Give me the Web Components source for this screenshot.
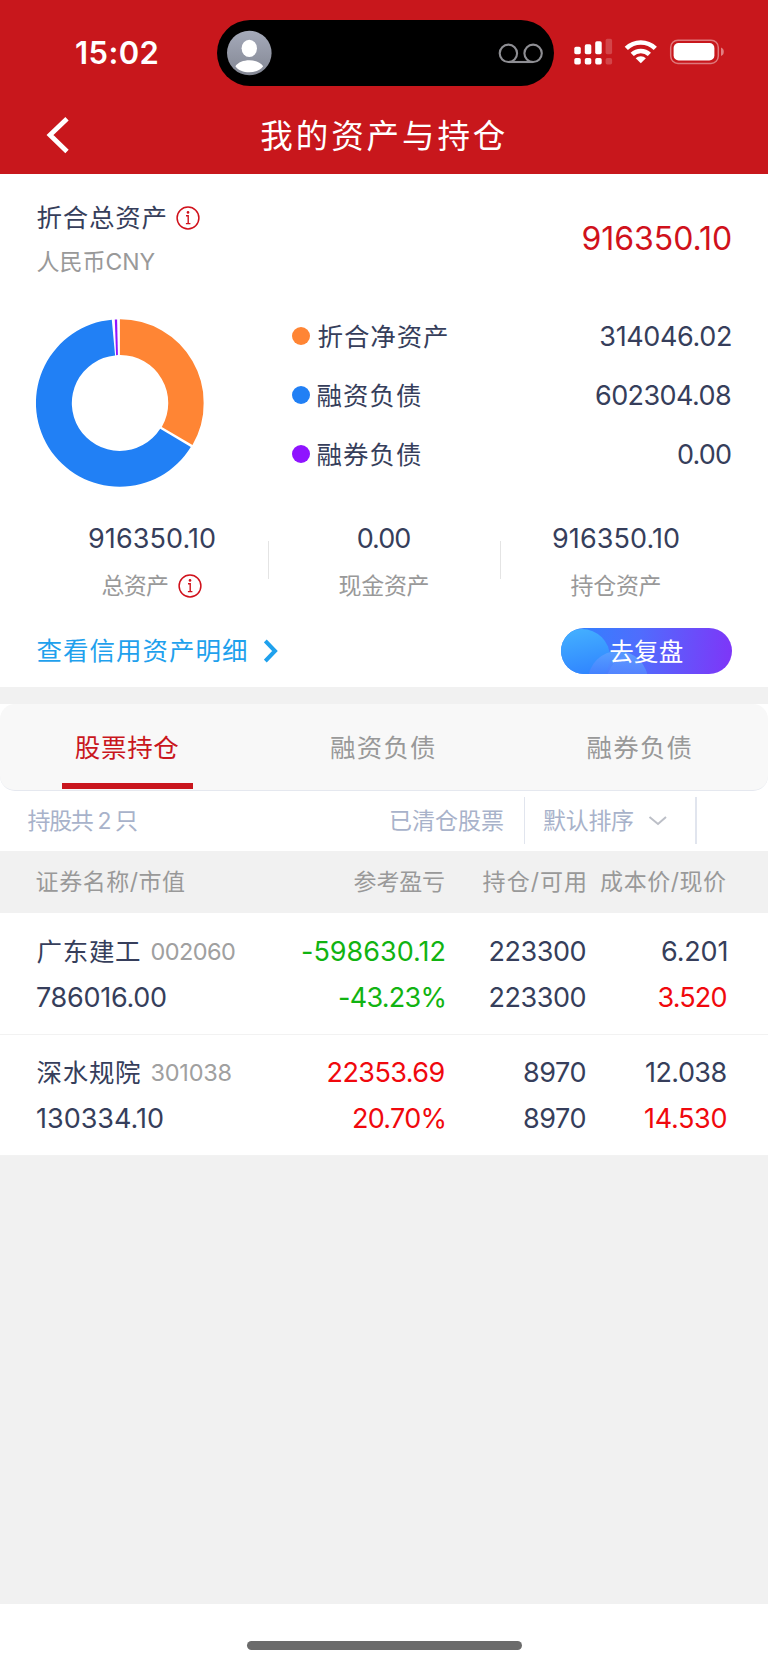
<!DOCTYPE html>
<html lang="zh-CN">
<head>
<meta charset="utf-8">
<title>我的资产与持仓</title>
<style>
body{margin:0;background:#f1f1f1;font-family:Inter,"Noto Sans CJK SC",sans-serif;color:#363e5b}
</style>
</head>
<body>
<asset-page></asset-page>
<script>
const FAMILY='Inter,"Noto Sans CJK SC",sans-serif';
const pen=document.createElement('canvas').getContext('2d');

// A one-line label whose glyphs span exactly `w` pixels; its box is trimmed to the glyphs.
class FitText extends HTMLElement{
  connectedCallback(){
    const size=+this.getAttribute('size')||25.5, w=+this.getAttribute('w'), weight=this.getAttribute('weight')||400;
    const text=this.textContent;
    const root=this.attachShadow({mode:'open'});
    pen.font=`${weight} ${size}px ${FAMILY}`;
    const m=pen.measureText(text);
    const ink=m.actualBoundingBoxLeft+m.actualBoundingBoxRight;
    const ls=(w-ink)/(Array.from(text).length-1);
    const latin=/^[\d.:%-]+$/.test(text);
    const lift=!latin?0:text.includes('%')?.2:size>25?.8:.3;
    const dy=(m.actualBoundingBoxAscent-m.actualBoundingBoxDescent)/2-(m.fontBoundingBoxAscent-m.fontBoundingBoxDescent)/2-lift;
    root.innerHTML=`<style>
      :host{display:block;flex:none;width:${w}px;height:${size}px;line-height:${size}px;font-size:${size}px;font-weight:${weight};white-space:pre}
      span{display:block;width:max-content;margin-left:${m.actualBoundingBoxLeft-(latin?0:.4)}px;letter-spacing:${ls}px;transform:translateY(${dy}px)}
    </style><span><slot></slot></span>`;
  }
}
customElements.define('fit-text',FitText);

const define=(name,html)=>{
  const t=document.createElement('template');t.innerHTML=html;
  customElements.define(name,class extends HTMLElement{
    constructor(){super();this.attachShadow({mode:'open'}).append(t.content.cloneNode(true));}
  });
};

define('info-icon',`<style>:host{display:block;flex:none;width:24px;height:24px}svg{display:block}</style>
<svg width="24" height="24" viewBox="0 0 24 24" fill="none" stroke="#d0111b"><circle cx="12" cy="12" r="10.9" stroke-width="1.500"/><circle cx="12" cy="6.400" r="1.300" fill="#d0111b" stroke="none"/><path d="M10 9.800h2.200v7.600M9.900 17.600h4.500" stroke-width="1.400"/></svg>`);

define('status-bar',`<style>
:host{display:flex;height:105px;box-sizing:border-box;padding:20px 40px 0 76px;align-items:flex-start;color:#fff}
.time{height:67px;display:flex;align-items:center;width:141px}
.island{width:337px;height:66px;border-radius:33px;background:#000;box-sizing:border-box;padding:0 10px;display:flex;align-items:center;justify-content:space-between;flex:none}
.sys{height:66px;margin-left:20px;flex:none}svg{display:block}
</style>
<div class="time"><fit-text size="31" w="81.500" weight="600">15:02</fit-text></div>
<div class="island">
<svg width="46" height="46" viewBox="0 0 46 46"><defs><linearGradient id="a" x2="0" y2="1"><stop stop-color="#a5aaba"/><stop offset="1" stop-color="#838793"/></linearGradient></defs><circle cx="22.300" cy="23" r="22.300" fill="url(#a)"/><ellipse cx="22.300" cy="18.300" rx="7.700" ry="8.600" fill="#fff"/><path d="M8.400 36.200c2.800-4 8-6 13.900-6s11.100 2 13.900 6c-2.800 4-8 6.100-13.900 6.100s-11.100-2.100-13.900-6.100z" fill="#fff"/></svg>
<svg width="46" height="24" viewBox="0 0 46 24" fill="none" stroke="#8e8e93" stroke-width="2.100"><circle cx="10.400" cy="12.300" r="8.700"/><circle cx="35.100" cy="12.300" r="8.700"/><path d="M10.400 21h24.700"/></svg>
</div>
<svg class="sys" width="152" height="66" viewBox="574 20 152 66" fill="#fff">
<rect x="574.300" y="46.700" width="6.500" height="7.500" rx="1.700"/><rect x="584.800" y="44.300" width="6.500" height="9.900" rx="1.700"/><rect x="595.200" y="41.300" width="6.500" height="12.900" rx="1.700"/><rect x="605.600" y="38.700" width="6.500" height="15.500" rx="1.700" opacity=".2"/>
<rect x="574.300" y="58" width="6.500" height="6.500" rx="1.700"/><rect x="584.800" y="58" width="6.500" height="6.500" rx="1.700"/><rect x="595.200" y="58" width="6.500" height="6.500" rx="1.700"/><rect x="605.600" y="58" width="6.500" height="6.500" rx="1.700" opacity=".2"/>
<g fill="none" stroke="#fff" stroke-width="4.600"><path d="M626.300 48.400a20.800 20.800 0 0 1 29 0"/><path d="M632.200 54.400a12.400 12.400 0 0 1 17.200 0"/></g><path d="M635.700 58.300a7.400 7.400 0 0 1 10.200 0l-5.100 5z"/>
<rect x="670.700" y="40.200" width="47.600" height="23.200" rx="7.300" fill="none" stroke="#fff" stroke-width="1.500" opacity=".42"/><rect x="673.600" y="43" width="40.800" height="17.500" rx="5"/><path d="M721 47.600c1.800.6 2.800 2.200 2.800 4.200s-1 3.600-2.800 4.200z" opacity=".45"/>
</svg>`);

define('nav-bar',`<style>
:host{display:grid;grid-template-columns:1fr auto 1fr;height:69px;box-sizing:border-box;padding:0 46px 0 45px;align-items:start;color:#fff}
svg{display:block;margin-top:11px}.t{height:62px;display:flex;align-items:center}
</style>
<svg width="26" height="38" viewBox="0 0 26 38"><path d="M22 2.800L5 19l17 16.500" fill="none" stroke="#fff" stroke-width="4.800"/></svg>
<div class="t"><fit-text size="32.500" w="243.500">我的资产与持仓</fit-text></div>`);

define('donut-chart',`<style>:host{display:block;width:168px;height:168px}svg{display:block}</style>
<svg width="168" height="168" viewBox="-84 -84 168 168">
<path d="M.1-83.700A83.700 83.700 0 0 1 72.700 42L42 24A47.900 47.900 0 0 0 .1-47.900z" fill="#ff8534"/>
<path d="M71 44.100A83.700 83.700 0 1 1-8-83.300L-4.700-47.600A47.900 47.900 0 1 0 40.400 25.700z" fill="#2180f5"/>
<path d="M-5-83.500L-2.700-83.600L-1.900-47.900L-3.700-47.700z" fill="#8f14ff"/></svg>`);

define('legend-row',`<style>
:host{display:flex;align-items:center;height:58.900px}
i{width:18.500px;height:18.500px;border-radius:50%;background:var(--dot);margin-right:7.800px;flex:none}
::slotted(:last-child){margin-left:auto}
</style><i></i><slot></slot>`);

define('asset-summary',`<style>
:host{display:block;height:513px;background:#fff;box-sizing:border-box;padding:0 37px;overflow:hidden}
.top{display:flex;justify-content:space-between;align-items:center;height:88px;margin-top:20.500px}
.r{display:flex;align-items:center}
.names{display:grid;grid-template-rows:44.500px 44.500px;align-items:center;padding-top:2px}
.names .r{gap:10px}.sub{color:#999}
.total{color:#d0111b}
.mid{display:flex;justify-content:space-between;margin-top:24px;height:169px}
.mid donut-chart{margin:12.700px 0 0 -1.500px;flex:none;transform:translate(-.2px,0)}
.legend{width:439.300px}
.legend legend-row>:first-child{margin-top:1px}
</style>
<div class="top"><div class="names"><div class="r"><fit-text w="129">折合总资产</fit-text><info-icon></info-icon></div><fit-text class="sub" size="23" w="119">人民币CNY</fit-text></div>
<fit-text class="total" size="32" w="148.500">916350.10</fit-text></div>
<div class="mid"><donut-chart></donut-chart><div class="legend">
<legend-row style="--dot:#ff8534"><fit-text w="129.500">折合净资产</fit-text><fit-text size="27" w="130.700">314046.02</fit-text></legend-row>
<legend-row style="--dot:#2180f5"><fit-text w="103.500">融资负债</fit-text><fit-text size="27" w="135">602304.08</fit-text></legend-row>
<legend-row style="--dot:#8f14ff"><fit-text w="103.500">融券负债</fit-text><fit-text size="27" w="53">0.00</fit-text></legend-row>
</div></div>
<asset-stats></asset-stats><asset-actions></asset-actions>`);

define('asset-stats',`<style>
:host{display:grid;grid-template-columns:231px 1px 231px 1px 1fr;margin-top:50px;height:72px}
.c{display:grid;grid-template-rows:25px 70px;justify-items:center;align-items:center;margin-left:-1px}
.l{display:flex;align-items:center;gap:9.500px;color:#999}
hr{margin:15px 0 0;border:0;width:1px;height:38.500px;background:#e4e4e4}
</style>
<div class="c"><fit-text size="27" w="126">916350.10</fit-text><div class="l"><fit-text size="23" w="66.500">总资产</fit-text><info-icon></info-icon></div></div><hr>
<div class="c"><fit-text size="27" w="52.500">0.00</fit-text><div class="l"><fit-text size="23" w="90">现金资产</fit-text></div></div><hr>
<div class="c" style="margin-left:0"><fit-text size="27" w="126">916350.10</fit-text><div class="l"><fit-text size="23" w="90">持仓资产</fit-text></div></div>`);

define('asset-actions',`<style>
:host{display:flex;justify-content:space-between;align-items:center;height:47px;margin:29.500px -1px 0 0}
.link{display:flex;align-items:center;gap:17px;color:#1fa1ed}
button{all:unset;width:171.500px;height:46.500px;border-radius:24px;display:grid;place-items:center;overflow:hidden;color:#fff;background:linear-gradient(95deg,#2a86ff,#4f6dfd 45%,#7d37f8 98%)}
button>*{grid-area:1/1}svg{display:block}
</style>
<div class="link"><fit-text w="209.500">查看信用资产明细</fit-text><svg width="14" height="24" viewBox="0 0 14 24"><path d="M1.300 2L11 12L1.300 22" fill="none" stroke="#1fa1ed" stroke-width="4"/></svg></div>
<button><svg width="171.500" height="46.500"><defs><linearGradient id="g" x1=".3" y1="0" x2=".5" y2="1"><stop stop-color="#44b0ff"/><stop offset="1" stop-color="#2c7dff"/></linearGradient><linearGradient id="h" x2="0" y2="1"><stop stop-color="#5ba2ff" stop-opacity=".9"/><stop offset=".5" stop-color="#4777ff" stop-opacity=".7"/></linearGradient><clipPath id="k"><circle cx="57" cy="53" r="30"/></clipPath></defs><circle cx="21" cy="29" r="28" fill="url(#g)"/><circle cx="57" cy="53" r="30" fill="url(#h)"/><circle cx="76" cy="56" r="31" fill="#82a5ff" opacity=".18" clip-path="url(#k)"/></svg><fit-text size="24.500" w="72.500" style="margin-left:1.500px">去复盘</fit-text></button>`);

define('holding-tabs',`<style>
:host{display:block;height:87px;background:#fff;margin-top:17px}
nav{display:grid;grid-template-columns:1fr 1fr 1fr;height:86.500px;border-radius:15px;background:#f8f8f8;box-sizing:border-box;border-bottom:1.500px solid #e5e8ef;color:#999}
div{display:grid;grid-template-rows:79px 5.500px;align-items:center;justify-items:center;margin-left:-.5px;margin-right:.5px}
div fit-text{margin-top:8px}
.on{color:#c9161d}.on fit-text{margin-left:-1px}.on::after{content:"";width:131px;height:5.500px;background:#c9161d}
</style><nav><div class="on"><fit-text w="103.500">股票持仓</fit-text></div><div><fit-text w="104">融资负债</fit-text></div><div style="margin-left:0;margin-right:0"><fit-text w="104">融券负债</fit-text></div></nav>`);

define('filter-bar',`<style>
:host{display:flex;align-items:center;height:60px;background:#fff;color:#a8b2ca;padding:0 28px}
.push{margin-left:auto}
fit-text{margin-top:-1px}
hr{width:1.500px;height:47px;margin:0;border:0;background:#e1e5ee;flex:none;align-self:flex-start;margin-top:6px!important}
svg{display:block}
</style>
<fit-text size="23" w="109.500">持股共 2 只</fit-text><fit-text class="push" size="23" w="112">已清仓股票</fit-text><hr style="margin:0 18.500px 0 20px"><fit-text size="23" w="90">默认排序</fit-text>
<svg style="margin:-1px 27.500px 0 14px" width="20" height="12" viewBox="0 0 20 12"><path d="M1.500 2L10 9L18 2" fill="none" stroke="#bcbfc7" stroke-width="2"/></svg><hr style="margin-right:43.500px">`);

define('holding-row',`<style>
:host{display:grid;grid-template-columns:265px 142.500px 141px 141px;padding:0 0 0 37px;background:#fff;justify-items:end;align-items:center;grid-auto-rows:var(--line,46px);box-sizing:border-box;height:var(--h,121.300px);padding-top:var(--pt,15px);border-bottom:var(--bb,1px solid #f2f2f2)}
::slotted(:nth-child(4n+1)){justify-self:start}
</style><slot></slot>`);

define('home-indicator',`<style>
:host{display:flex;justify-content:center;height:61px;background:#fff}
i{width:275px;height:9px;border-radius:5px;background:#6b6b6b;margin-top:37px}
</style><i></i>`);

define('asset-page',`<style>
:host{display:flex;flex-direction:column;width:768px;height:1665px;overflow:hidden;background:#f1f1f1}
header{background:#c8171c;height:174.300px}
.head{--h:62px;--line:61px;--pt:0;--bb:0;background:#f1f1f1;color:#999}
.n{display:flex;align-items:center;gap:11px}.n :last-child{color:#a0a0a0}
.g{color:#11b311}.d{color:#f0080d}home-indicator{margin-top:auto}
</style>
<header><status-bar></status-bar><nav-bar></nav-bar></header>
<asset-summary></asset-summary>
<holding-tabs></holding-tabs>
<filter-bar></filter-bar>
<holding-row class="head"><fit-text size="23" w="148.500">证券名称/市值</fit-text><fit-text size="23" w="90.500">参考盈亏</fit-text><fit-text size="23" w="102.500">持仓/可用</fit-text><fit-text size="23" w="126">成本价/现价</fit-text></holding-row>
<holding-row>
<div class="n"><fit-text w="103.500">广东建工</fit-text><fit-text size="23.500" w="83.500">002060</fit-text></div><fit-text class="g" size="27" w="142.500">-598630.12</fit-text><fit-text size="27" w="95">223300</fit-text><fit-text size="27" w="64.500">6.201</fit-text>
<fit-text size="27" w="129">786016.00</fit-text><fit-text class="g" size="27" w="105.500">-43.23%</fit-text><fit-text size="27" w="95">223300</fit-text><fit-text class="d" size="27" w="68">3.520</fit-text>
</holding-row>
<holding-row>
<div class="n"><fit-text w="103.500">深水规院</fit-text><fit-text size="23.500" w="80">301038</fit-text></div><fit-text class="d" size="27" w="116">22353.69</fit-text><fit-text size="27" w="61.500">8970</fit-text><fit-text size="27" w="80.500">12.038</fit-text>
<fit-text size="27" w="126">130334.10</fit-text><fit-text class="d" size="27" w="90.500">20.70%</fit-text><fit-text size="27" w="61.500">8970</fit-text><fit-text class="d" size="27" w="81.500">14.530</fit-text>
</holding-row>
<home-indicator></home-indicator>`);
</script>
</body>
</html>
